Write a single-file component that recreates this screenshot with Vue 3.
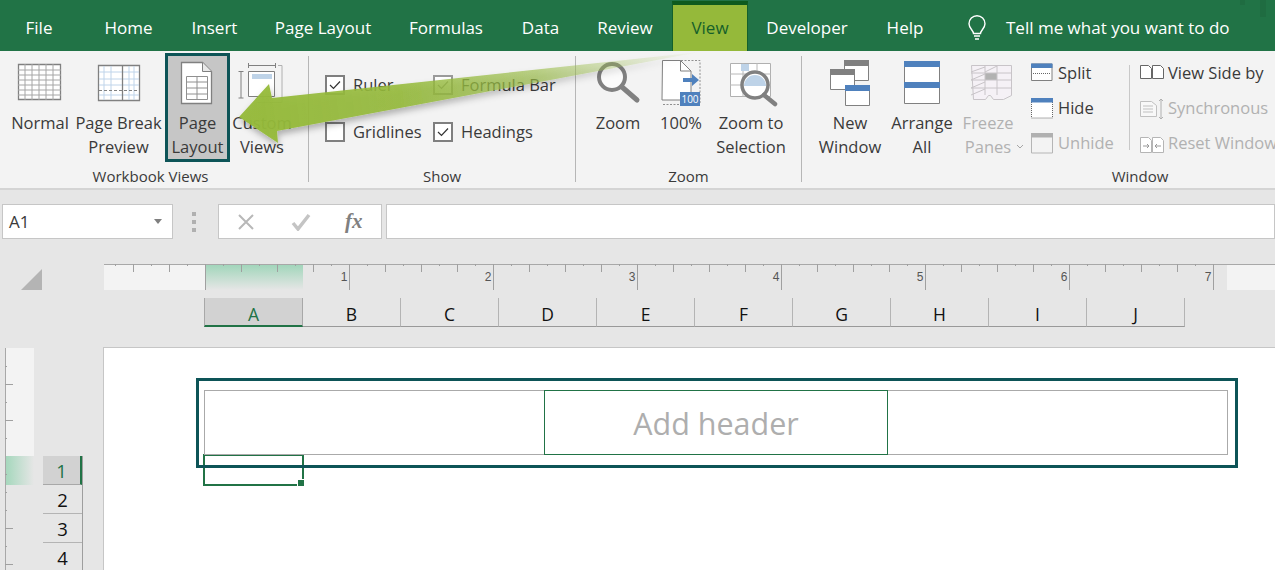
<template>
  <div class="app">
    <!-- tabs -->
    <div class="tabs">
      <div
        v-for="t in tabs"
        :key="t.name"
        class="tab"
        :class="{ active: t.name === 'View' }"
        :style="{ width: t.w + 'px' }"
      >{{ t.name }}</div>
      <svg class="bulb" width="18" height="26" viewBox="0 0 18 26" fill="none" stroke="#fff" stroke-width="1.4">
        <path d="M5.500 18.500c0-3-4.500-5-4.500-9.800a8 8 0 0 1 16 0c0 4.800-4.500 6.800-4.500 9.800z" />
        <path d="M6 21h6M7 24h4" />
      </svg>
      <div class="tell">Tell me what you want to do</div>
      <span class="mark mark-a"></span>
      <span class="mark mark-b"></span>
    </div>

    <!-- ribbon -->
    <div class="ribbon">
      <div class="group g-views">
        <div class="group-body pad-8">
          <div class="btn b-64">
            <svg width="58" height="54" viewBox="11 56 58 54" fill="none">
              <path d="M18.500 64.500h42v35h-42z" fill="#fff" stroke="#808080" stroke-width="1.300" />
              <path d="M18 70h43M18 75h43M18 80h43M18 85h43M18 90h43M18 95h43M32 64v36M39 64v36M46 64v36M53 64v36M25 64v36" stroke="#a6a6a6" />
            </svg>
            <div class="btn-label">Normal</div>
          </div>
          <div class="btn b-93">
            <svg width="87" height="54" viewBox="75 56 87 54" fill="none">
              <path d="M98.500 65.500h41v35h-41z" fill="#fff" stroke="#808080" stroke-width="1.300" />
              <path d="M104 66v34M111 66v34M129 66v34M134 66v34M99 72h40M99 79h40M99 85h40M99 95h40" stroke="#bfd4ea" />
              <path d="M122.500 66v34" stroke="#808080" stroke-width="1.300" />
              <path d="M99 90.500h40" stroke="#808080" stroke-dasharray="3 2" />
            </svg>
            <div class="btn-label">Page Break<br />Preview</div>
          </div>
          <div class="btn b-65 selected">
            <svg width="59" height="54" viewBox="168 56 59 54" fill="none">
              <path d="M181.500 62.500h21l9 9v32h-30z" fill="#fff" stroke="#808080" stroke-width="1.300" />
              <path d="M202.500 62.500v9h9" fill="#e8e8e8" stroke="#808080" />
              <path d="M186.500 76.500h21v23h-21zM186 82h22M186 88h22M186 94h22M197 76v23" stroke="#909090" />
            </svg>
            <div class="btn-label">Page<br />Layout</div>
          </div>
          <div class="btn b-64">
            <svg width="58" height="54" viewBox="233 56 58 54" fill="none">
              <path d="M248 65.500h28M248.500 63v5M275.500 63v5M241 72v26M238.500 71.500h5M238.500 98h5" stroke="#808080" />
              <path d="M248.500 71.500h26v25h-26z" fill="#fff" stroke="#808080" />
              <path d="M252 74h20v5h-20z" fill="#bed3e8" />
              <path d="M278 65.500h4v37h-25" stroke="#b0b0b0" />
            </svg>
            <div class="btn-label">Custom<br />Views</div>
          </div>
        </div>
        <div class="group-name nudge">Workbook Views</div>
      </div>
      <div class="sep"></div>

      <div class="group g-show">
        <div class="group-body">
          <div class="checks">
            <label v-for="c in checks" :key="c.name" class="check">
              <span class="box" :class="{ dim: c.dim }">
                <svg v-if="c.on" width="16" height="16" viewBox="0 0 16 16" fill="none">
                  <path d="M3 8l3.500 3.500L13 4.500" :stroke="c.dim ? '#8a8a8a' : '#333'" stroke-width="1.200" />
                </svg>
              </span>
              <span>{{ c.name }}</span>
            </label>
          </div>
        </div>
        <div class="group-name">Show</div>
      </div>
      <div class="sep"></div>

      <div class="group g-zoom">
        <div class="group-body pad-14">
          <div class="btn b-56">
            <svg width="50" height="54" viewBox="593 56 50 54" fill="none">
              <circle cx="612" cy="77" r="13" fill="#fbfbfb" stroke="#808080" stroke-width="4" />
              <path d="M622 87l15 13" stroke="#808080" stroke-width="5" stroke-linecap="round" />
            </svg>
            <div class="btn-label">Zoom</div>
          </div>
          <div class="btn b-70">
            <svg width="64" height="54" viewBox="649 56 64 54" fill="none">
              <path d="M662.500 60.500h18l10.500 10.500v29h-29z" fill="#fff" stroke="#808080" />
              <path d="M680.500 60.500v10.500h10.500" stroke="#808080" />
              <path d="M681 60.500h19v44h-38" stroke="#8f8f8f" stroke-dasharray="2 1.500" />
              <path d="M683 78h9v-4l7 6-7 6v-4h-9z" fill="#4f81bd" />
              <path d="M680 92h20v14h-20z" fill="#4f81bd" />
              <text x="690" y="103" class="mini">100</text>
            </svg>
            <div class="btn-label">100%</div>
          </div>
          <div class="btn b-70">
            <svg width="64" height="54" viewBox="719 56 64 54" fill="none">
              <path d="M730.500 63.500h40v33h-40z" fill="#fff" stroke="#b0b0b0" />
              <path d="M730 74h41M730 85h41M743 63v34M757 63v34" stroke="#b8b8b8" />
              <path d="M741 71h8v-7h-8z" fill="#bed3e8" />
              <circle cx="755" cy="85" r="13" fill="#fff" />
              <path d="M744 86a11 11 0 0 1 22 0z" fill="#bed3e8" />
              <circle cx="755" cy="85" r="13" stroke="#808080" stroke-width="3.500" />
              <path d="M764 95l11 9" stroke="#808080" stroke-width="4.500" stroke-linecap="round" />
            </svg>
            <div class="btn-label">Zoom to<br />Selection</div>
          </div>
        </div>
        <div class="group-name">Zoom</div>
      </div>
      <div class="sep"></div>

      <div class="group g-window">
        <div class="group-body pad-14">
          <div class="btn b-68">
            <svg width="62" height="54" viewBox="819 56 62 54" fill="none">
              <path d="M844.500 60.500h24v20h-24z" fill="#fff" stroke="#808080" />
              <path d="M844 60h25v6h-25z" fill="#808080" />
              <path d="M830.500 69.500h24v20h-24z" fill="#fff" stroke="#808080" />
              <path d="M830 69h25v6h-25z" fill="#808080" />
              <path d="M845.500 85.500h24v20h-24z" fill="#fff" stroke="#808080" />
              <path d="M845 85h25v6h-25z" fill="#4f81bd" />
            </svg>
            <div class="btn-label">New<br />Window</div>
          </div>
          <div class="btn b-76">
            <svg width="70" height="54" viewBox="887 56 70 54" fill="none">
              <path d="M904.500 61.500h35v42h-35z" fill="#fff" stroke="#808080" />
              <path d="M904 61h36v6h-36zM904 82h36v6h-36z" fill="#4f81bd" />
            </svg>
            <div class="btn-label">Arrange<br />All</div>
          </div>
          <div class="btn b-56 off">
            <svg width="50" height="54" viewBox="963 56 50 54" fill="none">
              <path d="M971.500 65.500h40v30l-8 4h-10l-3-4h-2l-3 4h-12z" fill="#f5f1f6" stroke="#c8c4c8" />
              <path d="M985 73h12v7h-12z" fill="#b2b2b2" />
              <path d="M971 73h41M971 80h41M971 88h41M985 65v30M997 65v30M971 72l14-5M971 80l14-6M971 88l14-6M971 95l14-6M985 72l12-6" stroke="#c8c4c8" />
            </svg>
            <div class="btn-label">Freeze<br />Panes</div>
            <svg class="chev" width="8" height="5" viewBox="0 0 8 5" fill="none">
              <path d="M1 1l3 3 3-3" stroke="#a6a6a6" />
            </svg>
          </div>

          <div class="small-col col-a">
            <div class="small-row">
              <svg width="22" height="22" viewBox="0 0 22 22" fill="none">
                <path d="M.500 1h20.500v16.500H.500z" fill="#fff" stroke="#808080" />
                <path d="M0 .500h21.500v4.500H0z" fill="#4f81bd" />
                <path d="M2 10.500h18" stroke="#666" stroke-dasharray="1 1" />
              </svg>
              <span>Split</span>
            </div>
            <div class="small-row">
              <svg width="22" height="22" viewBox="0 0 22 22" fill="none">
                <path d="M.500 1h21v19H.500z" fill="#fff" stroke="#666" stroke-dasharray="1 1" />
                <path d="M0 0h22v4.500H0z" fill="#4f81bd" />
              </svg>
              <span>Hide</span>
            </div>
            <div class="small-row off">
              <svg width="22" height="22" viewBox="0 0 22 22" fill="none">
                <path d="M.500 1h21v19H.500z" stroke="#b5b5b5" />
                <path d="M0 0h22v4.500H0z" fill="#b0b0b0" />
              </svg>
              <span>Unhide</span>
            </div>
          </div>
          <div class="sep-small"></div>
          <div class="small-col col-b">
            <div class="small-row">
              <svg width="24" height="22" viewBox="0 0 24 22" fill="none" stroke="#666">
                <path d="M.500 2.500h8l3 3v10H.500z" fill="#fff" />
                <path d="M12.500 2.500h8l3 3v10h-11z" fill="#fff" />
              </svg>
              <span>View Side by</span>
            </div>
            <div class="small-row off">
              <svg width="24" height="22" viewBox="0 0 24 22" fill="none" stroke="#c0c0c0">
                <path d="M.500 3.500h11l5 4v11H.500z" fill="#f8f8f8" />
                <path d="M3 8h10M3 11h10M3 14h10" />
                <path d="M21 1v20M19 3l2-2 2 2M19 19l2 2 2-2" stroke="#b0b0b0" />
              </svg>
              <span>Synchronous</span>
            </div>
            <div class="small-row off">
              <svg width="24" height="22" viewBox="0 0 24 22" fill="none" stroke="#b5b5b5">
                <path d="M.500 4.500h8l3 3v12H.500z" fill="#fff" />
                <path d="M12.500 4.500h8l3 3v12h-11z" fill="#fff" />
                <path d="M3 13h6M7 11l2 2-2 2M21 13h-6M17 11l-2 2 2 2" stroke="#999" />
              </svg>
              <span>Reset Window</span>
            </div>
          </div>
        </div>
        <div class="group-name">Window</div>
      </div>
    </div>

    <!-- formula bar -->
    <div class="workspace">
      <div class="formula-row">
        <div class="name-box">
          <span>A1</span>
          <svg width="8" height="5" viewBox="0 0 8 5"><path d="M0 0h8L4 5z" fill="#7f7f7f" /></svg>
        </div>
        <div class="grip"><i></i><i></i><i></i></div>
        <div class="fx-box">
          <svg width="18" height="18" viewBox="0 0 18 18" fill="none">
            <path d="M2 2l14 14M16 2L2 16" stroke="#b8b8b8" stroke-width="2" />
          </svg>
          <svg width="20" height="18" viewBox="0 0 20 18" fill="none">
            <path d="M2 10l5 6L18 2" stroke="#c4c4c4" stroke-width="3.500" />
          </svg>
          <span class="fx">fx</span>
        </div>
        <div class="formula-input"></div>
      </div>

      <!-- horizontal ruler -->
      <div class="ruler-row">
        <div class="corner">
          <svg width="21" height="21" viewBox="0 0 21 21"><path d="M21 0v21H0z" fill="#b4b4b4" /></svg>
        </div>
        <svg class="ruler" width="1123" height="26" viewBox="104 264 1123 26">
          <defs>
            <linearGradient id="rulerGreen" x1="0" y1="0" x2="0" y2="1">
              <stop offset="0" stop-color="#9fd5b9" />
              <stop offset="1" stop-color="#e6e6e6" />
            </linearGradient>
          </defs>
          <rect x="104" y="264" width="101" height="26" fill="#f3f3f3" />
          <rect x="205" y="264" width="98" height="26" fill="url(#rulerGreen)" />
          <path d="M104 264.500h1123" stroke="#a8a8a8" />
          <path
            v-for="t in hTicks"
            :key="t.x"
            :d="`M${t.x + 0.5} 264v${t.len}`"
            stroke="#a0a0a0"
          />
          <text v-for="n in 7" :key="n" :x="349 + (n - 1) * 144 - 5" y="281" class="ruler-num">{{ n }}</text>
        </svg>
        <div class="ruler-end"></div>
      </div>

      <!-- column headers -->
      <div class="col-row">
        <div
          v-for="c in columns"
          :key="c"
          class="col-head"
          :class="{ current: c === 'A' }"
        >{{ c }}</div>
      </div>

      <div class="sheet-row">
        <div class="gutter">
          <div class="v-ruler">
            <svg width="29" height="223" viewBox="5 348 29 223">
              <defs>
                <linearGradient id="rowGreen" x1="0" y1="0" x2="1" y2="0">
                  <stop offset="0" stop-color="#a3d7bb" />
                  <stop offset="1" stop-color="#e6e6e6" />
                </linearGradient>
              </defs>
              <rect x="5" y="348" width="29" height="108" fill="#f3f3f3" />
              <rect x="5" y="456" width="29" height="29" fill="url(#rowGreen)" />
              <path d="M5.500 348v222" stroke="#a8a8a8" />
              <path
                v-for="t in vTicks"
                :key="t.y"
                :d="`M5 ${t.y + 0.5}h${t.len}`"
                stroke="#a0a0a0"
              />
            </svg>
          </div>
          <div class="row-heads">
            <div
              v-for="r in 4"
              :key="r"
              class="row-head"
              :class="{ current: r === 1 }"
            >{{ r }}</div>
          </div>
        </div>

        <div class="sheet">
          <div class="cell-a1"><span class="handle"></span></div>
          <div class="header-mark">
            <div class="header-box">
              <div></div>
              <div class="header-mid">Add header</div>
              <div></div>
            </div>
          </div>
        </div>
      </div>
    </div>

    <!-- callout arrow -->
    <svg class="arrow" width="1275" height="190" viewBox="0 0 1275 190">
      <defs>
        <linearGradient id="arrowFill" gradientUnits="userSpaceOnUse" x1="240" y1="115" x2="700" y2="55">
          <stop offset="0" stop-color="#95ba3a" stop-opacity="0.96" />
          <stop offset="0.35" stop-color="#95ba3a" stop-opacity="0.88" />
          <stop offset="0.65" stop-color="#98bb45" stop-opacity="0.62" />
          <stop offset="1" stop-color="#a5c45e" stop-opacity="0" />
        </linearGradient>
        <filter id="arrowShadow" x="-10%" y="-30%" width="120%" height="170%">
          <feDropShadow dx="1" dy="4" stdDeviation="3" flood-color="#000" flood-opacity="0.3" />
        </filter>
      </defs>
      <path
        d="M239 117L269 84L272 98L700 52L277 131L278 143Z"
        fill="url(#arrowFill)"
        filter="url(#arrowShadow)"
      />
    </svg>
  </div>
</template>

<script setup>
const tabs = [
  { name: 'File', w: 78 },
  { name: 'Home', w: 101 },
  { name: 'Insert', w: 71 },
  { name: 'Page Layout', w: 146 },
  { name: 'Formulas', w: 100 },
  { name: 'Data', w: 89 },
  { name: 'Review', w: 80 },
  { name: 'View', w: 76 },
  { name: 'Developer', w: 118 },
  { name: 'Help', w: 78 }
]

const checks = [
  { name: 'Ruler', on: true },
  { name: 'Formula Bar', on: true, dim: true },
  { name: 'Gridlines', on: false },
  { name: 'Headings', on: true }
]

const columns = ['A', 'B', 'C', 'D', 'E', 'F', 'G', 'H', 'I', 'J']

// ruler marks: every 18px, longer every 36px, full height every inch (144px)
const hTicks = []
for (let x = 115; x < 1227; x += 18) {
  const k = Math.round((x - 349) / 18)
  let len = 2
  if (k % 8 === 0) len = 26
  else if (k % 2 === 0) len = 8
  hTicks.push({ x, len })
}

const vTicks = [
  { y: 366, len: 2 }, { y: 384, len: 8 }, { y: 402, len: 2 }, { y: 420, len: 8 },
  { y: 438, len: 2 }, { y: 474, len: 2 }, { y: 492, len: 2 }, { y: 510, len: 2 },
  { y: 528, len: 8 }, { y: 546, len: 2 }, { y: 564, len: 8 }
]
</script>

<style>
html, body {
  margin: 0;
  background: #e6e6e6;
}
</style>

<style scoped>
.app {
  position: relative;
  width: 1275px;
  height: 570px;
  overflow: hidden;
  font-family: "Open Sans", "Liberation Sans", sans-serif;
  font-size: 16.500px;
  color: #3a3a3a;
}

/* tabs */
.tabs {
  position: relative;
  display: flex;
  align-items: flex-end;
  height: 51px;
  background: #217346;
  color: #fff;
  font-size: 17px;
}
.tab {
  height: 51px;
  line-height: 56px;
  text-align: center;
  white-space: nowrap;
  box-sizing: border-box;
}
.tab.active {
  height: 50px;
  line-height: 46px;
  margin-left: 7px;
  background: #95b93a;
  color: #15602a;
  border-top: 4px solid #0e5a1e;
  border-left: 1px solid #14602c;
  border-right: 1px solid #14602c;
}
.bulb {
  margin: 0 20px 10px 24px;
}
.tell {
  height: 51px;
  line-height: 56px;
  white-space: nowrap;
}
.mark {
  position: absolute;
  top: 0;
  background: #1f6c41;
}
.mark-a { left: 1240px; width: 5px; height: 5px; }
.mark-b { left: 1260px; width: 6px; height: 17px; }

/* ribbon */
.ribbon {
  display: flex;
  height: 137px;
  background: #f3f3f3;
  border-bottom: 2px solid #d4d4d4;
}
.group {
  flex: none;
  display: flex;
  flex-direction: column;
}
.g-views { width: 308px; }
.g-show { width: 266px; }
.g-zoom { width: 225px; }
.g-window { width: 676px; }
.group-body {
  display: flex;
  height: 111px;
  padding-top: 2px;
  box-sizing: border-box;
}
.pad-8 { padding-left: 8px; }
.pad-14 { padding-left: 14px; }
.group-name {
  margin-top: 2px;
  height: 24px;
  line-height: 24px;
  text-align: center;
  font-size: 15px;
}
.group-name.nudge {
  padding-right: 7px;
}
.sep {
  flex: none;
  width: 1px;
  height: 126px;
  margin-top: 5px;
  background: #b6b6b6;
}
.btn {
  position: relative;
  display: flex;
  flex-direction: column;
  align-items: center;
  flex: none;
  height: 109px;
  box-sizing: border-box;
  border: 3px solid transparent;
}
.btn svg {
  display: block;
  flex: none;
}
.btn-label {
  margin-top: 1px;
  line-height: 24px;
  text-align: center;
  white-space: nowrap;
}
.b-56 { width: 56px; }
.b-64 { width: 64px; }
.b-65 { width: 65px; }
.b-68 { width: 68px; }
.b-70 { width: 70px; }
.b-76 { width: 76px; }
.b-93 { width: 93px; }
.btn.selected {
  background: #c6c6c6;
  border-color: #0d5457;
}
.off {
  color: #b1b1b1;
}
.btn svg.chev {
  position: absolute;
  left: 53px;
  top: 88px;
}
.mini {
  font-size: 10px;
  fill: #fff;
  text-anchor: middle;
}

/* show group */
.checks {
  display: grid;
  grid-template-columns: 108px 1fr;
  grid-auto-rows: 47px;
  padding: 8px 0 0 16px;
}
.check {
  display: flex;
  align-items: center;
  gap: 8px;
  white-space: nowrap;
}
.box {
  display: flex;
  align-items: center;
  justify-content: center;
  width: 20px;
  height: 20px;
  box-sizing: border-box;
  border: 2px solid #7f7f7f;
  background: #fff;
}
.box.dim {
  border-color: #9a9a9a;
}

/* window group */
.small-col {
  flex: none;
  padding-top: 2px;
}
.col-a {
  width: 98px;
  margin-left: 15px;
}
.col-b {
  margin-left: 10px;
}
.small-row {
  display: flex;
  align-items: center;
  height: 35px;
  white-space: nowrap;
}
.small-row svg {
  flex: none;
  margin-top: 2px;
}
.col-a .small-row { gap: 5px; }
.col-b .small-row { gap: 4px; }
.sep-small {
  flex: none;
  width: 1px;
  height: 85px;
  margin-top: 12px;
  background: #c8c8c8;
}

/* formula bar */
.workspace {
  display: flex;
  flex-direction: column;
  height: 380px;
  background: #e6e6e6;
}
.formula-row {
  display: flex;
  align-items: stretch;
  height: 35px;
  margin-top: 14px;
  padding-left: 2px;
}
.name-box, .fx-box, .formula-input {
  box-sizing: border-box;
  background: #fff;
  border: 1px solid #c6c6c6;
}
.name-box {
  display: flex;
  align-items: center;
  justify-content: space-between;
  width: 171px;
  padding: 0 10px 0 6px;
  font-size: 17px;
}
.grip {
  display: flex;
  flex-direction: column;
  justify-content: center;
  gap: 4px;
  width: 45px;
  padding-left: 19px;
  box-sizing: border-box;
}
.grip i {
  display: block;
  width: 4px;
  height: 4px;
  background: #b0b0b0;
}
.fx-box {
  display: flex;
  align-items: center;
  width: 164px;
  padding-left: 18px;
  gap: 36px;
}
.fx {
  margin-left: -2px;
  font-family: "Liberation Serif", serif;
  font-style: italic;
  font-weight: bold;
  font-size: 21px;
  color: #808080;
}
.formula-input {
  flex: 1;
  margin-left: 4px;
}

/* ruler */
.ruler-row {
  display: flex;
  height: 26px;
  margin-top: 25px;
}
.corner {
  width: 104px;
  flex: none;
  padding: 5px 0 0 21px;
  box-sizing: border-box;
}
.ruler {
  display: block;
  flex: none;
}
.ruler-end {
  flex: 1;
  background: #f3f3f3;
  border-top: 1px solid #a8a8a8;
  box-sizing: border-box;
}
.ruler-num {
  font-size: 12px;
  fill: #555;
  text-anchor: middle;
  font-family: "Liberation Sans", sans-serif;
}

/* column headers */
.col-row {
  display: flex;
  height: 29px;
  margin: 8px 0 0 204px;
}
.col-head {
  width: 98px;
  box-sizing: border-box;
  border-right: 1px solid #b4b4b4;
  border-bottom: 1px solid #999;
  text-align: center;
  line-height: 32px;
  font-size: 17.500px;
  color: #111;
}
.col-head.current {
  width: 99px;
  background: #d2d2d2;
  color: #217346;
  border-left: 1px solid #a8a8a8;
  border-right: 1px solid #a8a8a8;
  border-bottom: 2px solid #217346;
}

/* sheet */
.sheet-row {
  flex: 1;
  display: flex;
  margin-top: 20px;
  min-height: 0;
}
.gutter {
  display: flex;
  width: 103px;
  flex: none;
  padding: 1px 0 0 5px;
  box-sizing: border-box;
}
.v-ruler {
  width: 29px;
  flex: none;
}
.v-ruler svg {
  display: block;
}
.row-heads {
  width: 39px;
  margin: 108px 0 0 9px;
  flex: none;
  border-right: 1px solid #9e9e9e;
}
.row-head {
  height: 29px;
  box-sizing: border-box;
  border-bottom: 1px solid #b4b4b4;
  text-align: center;
  line-height: 30px;
  font-size: 18.500px;
  color: #111;
}
.row-head.current {
  background: #d2d2d2;
  color: #217346;
  border-right: 2px solid #217346;
  border-bottom-color: #a8a8a8;
}
.sheet {
  position: relative;
  flex: 1;
  background: #fff;
  border-top: 1px solid #c6c6c6;
  border-left: 1px solid #c6c6c6;
  box-sizing: border-box;
}
.header-mark {
  position: relative;
  box-sizing: border-box;
  width: 1042px;
  height: 90px;
  margin: 30px 0 0 92px;
  padding: 9px 7px 9px 5px;
  border: 3px solid #0d5457;
}
.header-box {
  display: grid;
  grid-template-columns: 1fr 344px 1fr;
  height: 65px;
  box-sizing: border-box;
  border: 1px solid #aaa;
}
.header-mid {
  height: 65px;
  margin-top: -1px;
  box-sizing: border-box;
  border: 1px solid #217346;
  padding-top: 1px;
  text-align: center;
  font-size: 30.500px;
  line-height: 63px;
  color: #aeaeae;
}
/* selected cell sits across the header margin */
.cell-a1 {
  position: absolute;
  left: 99px;
  top: 106px;
  width: 101px;
  height: 32px;
  box-sizing: border-box;
  border: 2px solid #217346;
}
.handle {
  position: absolute;
  right: -3px;
  bottom: -3px;
  width: 6px;
  height: 6px;
  background: #217346;
  border: 1px solid #fff;
}

.arrow {
  position: absolute;
  left: 0;
  top: 0;
  pointer-events: none;
}
</style>
